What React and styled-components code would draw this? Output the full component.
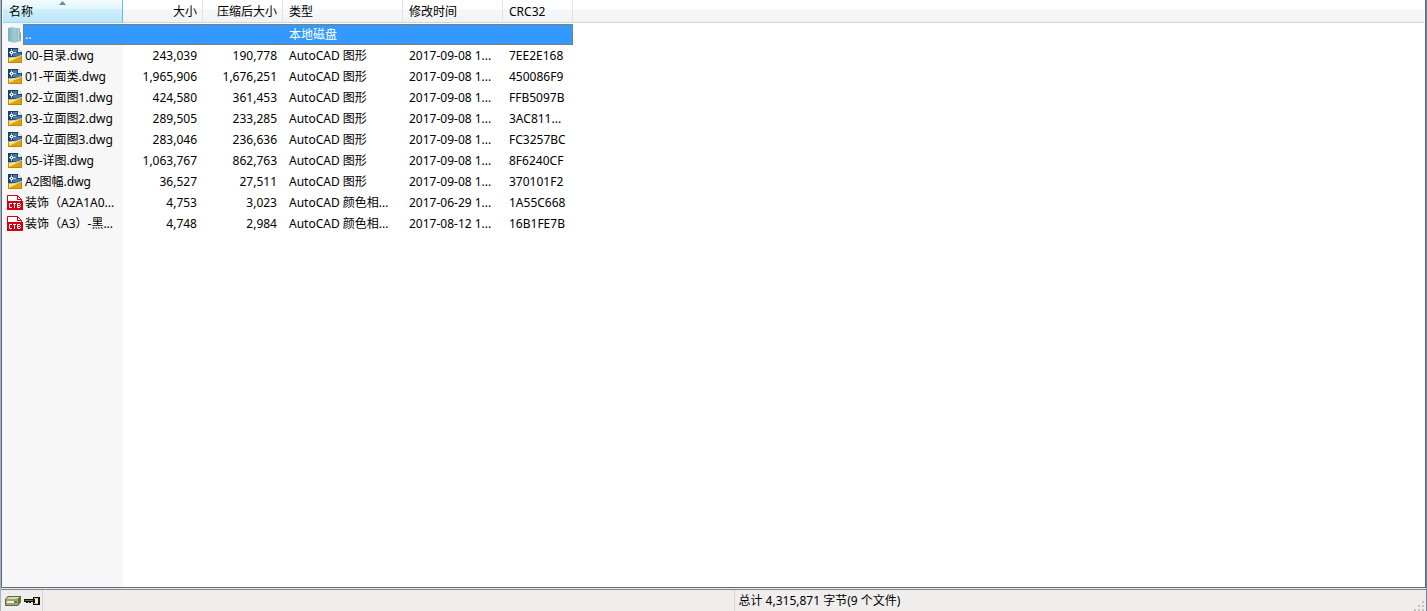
import React, { useState } from "react";
import styled, { createGlobalStyle } from "styled-components";

const columns = [
  { key: "name", label: "名称", width: 120 },
  { key: "size", label: "大小", width: 80, align: "right" },
  { key: "packed", label: "压缩后大小", width: 80, align: "right" },
  { key: "type", label: "类型", width: 120 },
  { key: "modified", label: "修改时间", width: 100 },
  { key: "crc", label: "CRC32", width: 70 },
];

const DWG = "AutoCAD 图形";
const CTB = "AutoCAD 颜色相...";

const files = [
  { icon: "folder", name: "..", type: "本地磁盘" },
  { icon: "dwg", name: "00-目录.dwg", size: "243,039", packed: "190,778", type: DWG, modified: "2017-09-08 1...", crc: "7EE2E168" },
  { icon: "dwg", name: "01-平面类.dwg", size: "1,965,906", packed: "1,676,251", type: DWG, modified: "2017-09-08 1...", crc: "450086F9" },
  { icon: "dwg", name: "02-立面图1.dwg", size: "424,580", packed: "361,453", type: DWG, modified: "2017-09-08 1...", crc: "FFB5097B" },
  { icon: "dwg", name: "03-立面图2.dwg", size: "289,505", packed: "233,285", type: DWG, modified: "2017-09-08 1...", crc: "3AC811..." },
  { icon: "dwg", name: "04-立面图3.dwg", size: "283,046", packed: "236,636", type: DWG, modified: "2017-09-08 1...", crc: "FC3257BC" },
  { icon: "dwg", name: "05-详图.dwg", size: "1,063,767", packed: "862,763", type: DWG, modified: "2017-09-08 1...", crc: "8F6240CF" },
  { icon: "dwg", name: "A2图幅.dwg", size: "36,527", packed: "27,511", type: DWG, modified: "2017-09-08 1...", crc: "370101F2" },
  { icon: "ctb", name: "装饰（A2A1A0...", size: "4,753", packed: "3,023", type: CTB, modified: "2017-06-29 1...", crc: "1A55C668" },
  { icon: "ctb", name: "装饰（A3）-黑...", size: "4,748", packed: "2,984", type: CTB, modified: "2017-08-12 1...", crc: "16B1FE7B" },
];

const GlobalStyle = createGlobalStyle`
  * {
    box-sizing: border-box;
  }
  body {
    margin: 0;
    color: #000;
    font-family: "Noto Sans", "Noto Sans CJK SC", sans-serif;
    font-size: 12px;
    line-height: 20px;
  }
`;

const Window = styled.main`
  display: flex;
  flex-direction: column;
  height: 100vh;
  overflow: hidden;
  background: #f0eded;
  border-left: 1px solid #a9b4c2;
  border-right: 1px solid #6d87a3;
`;

const ListPane = styled.section`
  flex: 1;
  min-height: 0;
  overflow: hidden;
  padding: 0 1px;
  border: solid #5c6777;
  border-width: 0 1px 1px;
  background: linear-gradient(to right, #f7f7f7 121px, #fff 121px);
`;

const Table = styled.table`
  width: 100%;
  table-layout: fixed;
  border-collapse: separate;
  border-spacing: 0;
`;

const HeadCell = styled.th`
  position: relative;
  height: 23px;
  padding: 0;
  font-weight: normal;
  border-bottom: 1px solid #d5d5d5;
  border-right: 1px solid #e2e3e5;
  background: linear-gradient(#fff 40%, #f7f8fa 40%, #f1f2f4);
  &:last-child {
    border-right: none;
  }
  ${(props) =>
    props.$sorted &&
    `
    border-bottom-color: #96d9f9;
    border-right-color: #69bbe3;
    background: linear-gradient(#f2fbfe 0%, #e3f6fd 40%, #d0effb 40%, #bce7f8);
  `}
`;

const HeadButton = styled.button`
  display: block;
  width: 100%;
  height: 22px;
  padding: 2px 5px 0 6px;
  border: none;
  background: transparent;
  color: inherit;
  font: inherit;
  line-height: 20px;
  text-align: ${(props) => props.$align || "left"};
  white-space: nowrap;
`;

const SortArrow = styled.svg`
  position: absolute;
  top: 1px;
  left: 50%;
  margin-left: -4px;
`;

const Spacer = styled.td`
  height: 1px;
  padding: 0;
`;

const Row = styled.tr`
  color: ${(props) => (props.$selected ? "#fff" : "#000")};
`;

const Cell = styled.td`
  height: 21px;
  padding: 0 6px;
  text-align: ${(props) => props.$align || "left"};
  white-space: nowrap;
  ${(props) =>
    props.$selected &&
    `
    line-height: 19px;
    background: #3399ff;
    border: dotted #cc6600;
    border-width: 1px 0;
    &:last-of-type {
      border-right-width: 1px;
    }
  `}
`;

const NameCell = styled.td`
  height: 21px;
  padding: 0 0 0 4px;
`;

const NameBox = styled.div`
  display: flex;
  align-items: center;
  height: 21px;
`;

const Label = styled.span`
  flex: 1;
  height: 21px;
  padding-left: 2px;
  line-height: 22px;
  white-space: nowrap;
  ${(props) =>
    props.$selected &&
    `
    padding-left: 1px;
    line-height: 20px;
    background: #3399ff;
    border: 1px dotted #cc6600;
    border-right: none;
  `}
`;

const FileIcon = styled.svg`
  display: block;
  flex: none;
  width: 16px;
  height: 17px;
`;

const StatusBar = styled.footer`
  display: grid;
  grid-template-columns: 42px 1fr 1fr;
  flex: none;
  height: 22px;
  margin-top: 1px;
  border-top: 1px solid #7d8490;
`;

const StatusIcons = styled.div`
  display: flex;
  align-items: center;
  gap: 2px;
  padding-left: 4px;
  border-right: 1px solid #d7d4d4;
`;

const StatusPane = styled.div`
  display: flex;
  justify-content: space-between;
  padding: ${(props) => (props.$divided ? "0" : "0 0 0 4px")};
  border-right: ${(props) => (props.$divided ? "1px solid #d7d4d4" : "none")};
`;

const StatusText = styled.span`
  line-height: 22px;
  white-space: nowrap;
`;

const Grip = styled.svg`
  align-self: flex-end;
  flex: none;
`;

const FolderIcon = () => (
  <FileIcon viewBox="0 0 16 17" aria-hidden="true">
    <defs>
      <linearGradient id="folder">
        <stop offset="0" stopColor="#78aebc" />
        <stop offset="0.5" stopColor="#a8cfda" />
        <stop offset="1" stopColor="#7fa9b9" />
      </linearGradient>
    </defs>
    <path d="M1 2l6-1 1 1h4l1 1v3l1 1v8l-4 1-3 1-6-2z" fill="url(#folder)" />
    <path d="M7 2l1 1v13l-2-1V3z" fill="#9cc8d4" />
    <path d="M11.500 3v10l1 2" fill="none" stroke="#b9d8e0" />
  </FileIcon>
);

const DwgIcon = () => (
  <FileIcon viewBox="0 0 16 17" aria-hidden="true">
    <path d="M1 1h10l4 4v11H1z" fill="#1f4a75" />
    <path d="M6 2h4v4h4v3H6z" fill="#4a769f" />
    <path d="M11 1l4 4h-4z" fill="#e8f0f6" />
    <path d="M1 11c5 0 10-1 14-2v7H1z" fill="#dfa30a" />
    <path d="M2 11c4 0 7 0 10-1L2 15z" fill="#fbe070" />
    <path d="M1 11c5 0 10-1 14-2.500" fill="none" stroke="#fff" strokeWidth="0.800" />
    <path d="M4.500 2v2M4.500 7v2M1 5.500h2M6 5.500h3" stroke="#b9d0e4" />
    <rect x="3.500" y="4.500" width="2" height="2" fill="#1f4a75" stroke="#e9f2f9" />
    <path d="M1.500 11v4.500h13V9" fill="none" stroke="#b17c0c" strokeOpacity="0.700" />
    <path d="M1.500 10V1.500H11" fill="none" stroke="#173d63" />
  </FileIcon>
);

const CtbIcon = () => (
  <FileIcon viewBox="0 0 16 17" aria-hidden="true">
    <path d="M.5 1.500h10l4 4V9H.5z" fill="#fff" stroke="#d40012" />
    <path d="M10.500 1.500v4h4" fill="none" stroke="#d40012" />
    <path d="M0 7h16v9H0z" fill="#d40012" />
    <path
      d="M5 9.500H2.500v4H5M6 9.500h3M7.500 9v5M13 9.500h-2.500v4H13M11 11.500h2M13.500 10v1M13.500 12v1"
      fill="none"
      stroke="#fff"
    />
  </FileIcon>
);

const icons = { folder: FolderIcon, dwg: DwgIcon, ctb: CtbIcon };

const DriveIcon = () => (
  <svg width="16" height="12" viewBox="0 0 16 12" aria-hidden="true">
    <path d="M0 4l3-3h13v6l-3 4H0z" fill="#686b39" />
    <path d="M1 4l3-2h11l-3 2z" fill="#d9dbb4" />
    <path d="M1 4h12v6H1z" fill="#9da273" />
    <path d="M2 6h10v2H2z" fill="#e7f1dc" />
    <path d="M9 7h3" stroke="#26996b" strokeWidth="2" />
  </svg>
);

const KeyIcon = () => (
  <svg width="17" height="10" viewBox="0 0 17 10" aria-hidden="true">
    <path d="M1 3h9v3H8v1H6V6H5v1H3V6H1z" fill="#141408" />
    <path d="M2 4.500h8" stroke="#77733d" />
    <path d="M10 1h7v8h-7z" fill="#141408" />
    <path d="M12 3h3v4h-3z" fill="#f0eded" />
    <path d="M11 2.500h4M11 7.500h4" stroke="#c9c28c" />
  </svg>
);

const App = () => {
  const [selected, setSelected] = useState(0);

  return (
    <>
      <GlobalStyle />
      <Window>
        <ListPane>
          <Table>
            <colgroup>
              {columns.map((column) => (
                <col key={column.key} width={column.width} />
              ))}
              <col />
            </colgroup>
            <thead>
              <tr>
                {columns.map((column, index) => (
                  <HeadCell key={column.key} scope="col" $sorted={index === 0}>
                    <HeadButton type="button" $align={column.align}>
                      {column.label}
                    </HeadButton>
                    {index === 0 && (
                      <SortArrow width="7" height="4" viewBox="0 0 7 4" aria-hidden="true">
                        <path d="M0 4l3.500-4L7 4z" fill="#5d8ca3" />
                      </SortArrow>
                    )}
                  </HeadCell>
                ))}
                <HeadCell as="td" $sorted={false} />
              </tr>
            </thead>
            <tbody>
              <tr>
                <Spacer colSpan={7} />
              </tr>
              {files.map((file, index) => {
                const Icon = icons[file.icon];
                const active = selected === index;
                return (
                  <Row key={file.name} $selected={active} onClick={() => setSelected(index)}>
                    <NameCell>
                      <NameBox>
                        <Icon />
                        <Label $selected={active}>{file.name}</Label>
                      </NameBox>
                    </NameCell>
                    {columns.slice(1).map((column) => (
                      <Cell key={column.key} $align={column.align} $selected={active}>
                        {file[column.key]}
                      </Cell>
                    ))}
                  </Row>
                );
              })}
            </tbody>
          </Table>
        </ListPane>
        <StatusBar>
          <StatusIcons>
            <DriveIcon />
            <KeyIcon />
          </StatusIcons>
          <StatusPane $divided />
          <StatusPane>
            <StatusText>总计 4,315,871 字节(9 个文件)</StatusText>
            <Grip width="12" height="12" viewBox="0 0 12 12" aria-hidden="true">
              <path
                d="M8 1h2v2H8zM4 5h2v2H4zM8 5h2v2H8zM0 9h2v2H0zM4 9h2v2H4zM8 9h2v2H8z"
                fill="#c4c1c1"
              />
            </Grip>
          </StatusPane>
        </StatusBar>
      </Window>
    </>
  );
};

export default App;
